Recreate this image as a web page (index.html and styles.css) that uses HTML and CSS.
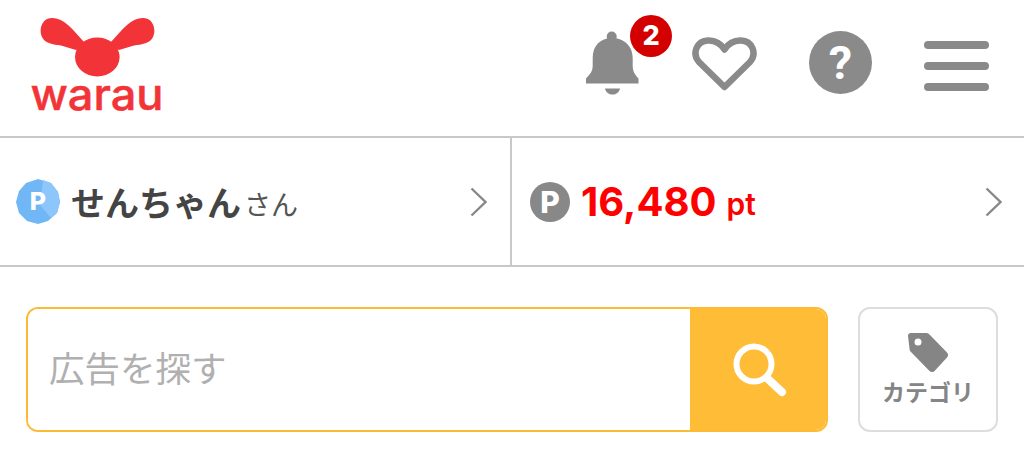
FILE: index.html
```html
<!DOCTYPE html>
<html lang="ja">
<head>
<meta charset="utf-8">
<title>warau</title>
<link rel="stylesheet" href="styles.css">
</head>
<body>
<header class="header">
  <a class="logo">
    <svg class="logo-svg" viewBox="30 17 135 108" width="135" height="108">
      <g fill="#f23438">
        <path d="M86 44 C80 38 74 30 68 25 C61 18.500 53 16.500 47 19 C41 22 39 31 42 37 C45 43.500 53 44.500 61 45.500 L76 50 Z"/>
        <path d="M109 44 C115 38 121 30 127 25 C134 18.500 142 16.500 148 19 C154 22 156 31 153 37 C150 43.500 142 44.500 134 45.500 L119 50 Z"/>
        <ellipse cx="97.300" cy="57" rx="22.300" ry="19.400"/>
      </g>
      <text class="logo-text" x="30.500" y="110" textLength="133" lengthAdjust="spacingAndGlyphs">warau</text>
    </svg>
  </a>
  <nav class="icons">
    <div class="bell">
      <svg viewBox="586 30 54 66" width="54" height="66">
        <g fill="#8a8a8a">
          <circle cx="611.700" cy="36.500" r="5"/>
          <path d="M612 38 C600 38 592.700 46 592.700 58 L592.700 66 C592.700 72 589 75 586 78.500 L586 83.500 L638.500 83.500 L638.500 78.500 C635.500 75 632.700 72 632.700 66 L632.700 58 C632.700 46 624 38 612 38 Z"/>
          <path d="M605 88.500 L620 88.500 C619 92.500 616 94.500 612.500 94.500 C609 94.500 606 92.500 605 88.500 Z"/>
        </g>
      </svg>
      <span class="badge">2</span>
    </div>
    <svg class="heart" viewBox="692 37 65 54" width="65" height="54">
      <path d="M724.500 87 L699 62 C691.500 53 697 41 708 40.500 C715 40.200 721 44 724.500 49.500 C728 44 734 40.200 741 40.500 C752 41 757.500 53 750 62 Z" fill="none" stroke="#8a8a8a" stroke-width="6.500" stroke-linejoin="round"/>
    </svg>
    <div class="help">?</div>
    <div class="menu"><span class="bar"></span><span class="bar"></span><span class="bar"></span></div>
  </nav>
</header>

<section class="account">
  <a class="cell cell-user">
    <svg class="rank" viewBox="0 0 44 45" width="44" height="45">
      <path d="M22 0 L35 4 L42 13 L44 23 L41 34 L32 42 L22 45 L11 42 L3 34 L0 23 L3 12 L10 4 Z" fill="#72b7f5"/>
      <path d="M27 1 L35 4 L42 13 L44 23 L41 34 L35 39 L24 26 Z" fill="#8cc6fb"/>
    </svg>
    <span class="rank-letter">P</span>
    <span class="name">せんちゃん</span><span class="san">さん</span>
    <svg class="chev" viewBox="0 0 17 30" width="17" height="30"><path d="M1.500 1.500 L15.500 15 L1.500 28.500" fill="none" stroke="#888" stroke-width="2.400"/></svg>
  </a>
  <a class="cell cell-points">
    <span class="p-mark">P</span>
    <span class="points">16,480</span><span class="pt">pt</span>
    <svg class="chev" viewBox="0 0 17 30" width="17" height="30"><path d="M1.500 1.500 L15.500 15 L1.500 28.500" fill="none" stroke="#888" stroke-width="2.400"/></svg>
  </a>
</section>

<section class="search-row">
  <form class="search">
    <input class="search-input" type="text" placeholder="広告を探す">
    <button class="search-btn" type="button">
      <svg viewBox="732 342 56 54" width="56" height="54">
        <circle cx="753" cy="363" r="17.500" fill="none" stroke="#fff" stroke-width="6"/>
        <path d="M767 378 L781 391" stroke="#fff" stroke-width="8" stroke-linecap="round"/>
      </svg>
    </button>
  </form>
  <a class="category">
    <svg class="tag" viewBox="908 332 41 41" width="41" height="41">
      <path fill-rule="evenodd" fill="#858585" d="M911 333 L926 333 C927.500 333 928.500 333.500 929.500 334.500 L947 352.500 C948.500 354 948.500 356 947 357.500 L935 370.500 C933.500 372.500 931 372.500 929.500 371 L911 352 C910 351 909.500 350 909.500 348.500 L908 336 C908 334 909 333 911 333 Z M918 338.500 A3.500 3.500 0 1 0 918 345.500 A3.500 3.500 0 1 0 918 338.500 Z"/>
    </svg>
    <span class="category-label">カテゴリ</span>
  </a>
</section>
</body>
</html>
```

FILE: styles.css
```css
* { box-sizing: border-box; }
html, body { margin: 0; padding: 0; }
body {
  width: 1024px;
  height: 457px;
  overflow: hidden;
  background: #fff;
  font-family: "Noto Sans CJK JP", "Noto Sans", sans-serif;
  color: #444;
}
.header {
  height: 138px;
  border-bottom: 2px solid #c8c8c8;
  display: flex;
  align-items: flex-start;
  justify-content: space-between;
  padding: 17px 35px 0 30px;
}
.logo { display: block; line-height: 0; }
.logo-text {
  font-family: "Inter", sans-serif;
  font-weight: 500;
  font-size: 44px;
  fill: #f23438;
  stroke: #f23438;
  stroke-width: 0.500;
  stroke-linejoin: round;
}
.icons {
  display: flex;
  align-items: flex-start;
}
.bell {
  position: relative;
  width: 54px;
  height: 66px;
  margin-top: 13px;
  line-height: 0;
}
.badge {
  position: absolute;
  left: 44px;
  top: -15px;
  width: 42px;
  height: 42px;
  border-radius: 50%;
  background: #d40000;
  color: #fff;
  font-family: "Inter", sans-serif;
  font-weight: 800;
  font-size: 27px;
  line-height: 42px;
  text-align: center;
}
.heart { margin: 20px 0 0 52px; display: block; }
.help {
  width: 63px;
  height: 63px;
  margin: 14px 0 0 52px;
  border-radius: 50%;
  background: #8a8a8a;
  color: #fff;
  font-family: "Roboto", sans-serif;
  font-weight: 700;
  font-size: 47px;
  line-height: 63px;
  text-align: center;
}
.menu {
  width: 65px;
  height: 50px;
  margin: 24px 0 0 52px;
  display: flex;
  flex-direction: column;
  justify-content: space-between;
}
.bar {
  display: block;
  height: 8px;
  border-radius: 4px;
  background: #8a8a8a;
}

.account {
  display: grid;
  grid-template-columns: 512px 512px;
  height: 129px;
  border-bottom: 2px solid #c8c8c8;
}
.cell {
  display: flex;
  align-items: center;
  position: relative;
}
.cell-user {
  border-right: 2px solid #c8c8c8;
  padding: 0 23px 0 16px;
}
.cell-points {
  padding: 0 22px 0 18px;
}
.rank { display: block; flex: none; }
.rank-letter {
  position: absolute;
  left: 16px;
  width: 44px;
  text-align: center;
  color: #fff;
  font-family: "Inter", sans-serif;
  font-weight: 800;
  font-size: 25px;
  line-height: 45px;
}
.name {
  margin-left: 11px;
  font-weight: 700;
  font-size: 34px;
  color: #444;
  line-height: 1;
}
.san {
  margin: 4px 0 0 3px;
  font-size: 27px;
  color: #555;
  line-height: 1;
}
.chev { margin-left: auto; display: block; flex: none; }
.p-mark {
  flex: none;
  width: 40px;
  height: 40px;
  border-radius: 50%;
  background: #888;
  color: #fff;
  font-family: "Inter", sans-serif;
  font-weight: 800;
  font-size: 30px;
  line-height: 40px;
  text-align: center;
}
.points {
  margin-left: 11px;
  font-family: "Inter", sans-serif;
  font-weight: 700;
  font-size: 40px;
  line-height: 1;
  color: #f00;
}
.pt {
  margin: 4px 0 0 10px;
  font-family: "Inter", sans-serif;
  font-weight: 600;
  font-size: 30px;
  line-height: 1;
  color: #f00;
}

.search-row {
  display: flex;
  gap: 30px;
  padding: 40px 26px 0;
}
.search {
  flex: 1;
  height: 125px;
  display: flex;
  border: 2px solid #fdbb35;
  border-radius: 12px;
  overflow: hidden;
}
.search-input {
  flex: 1;
  min-width: 0;
  border: 0;
  outline: 0;
  padding: 0 0 6px 21px;
  background: #fff;
  font-family: "Noto Sans CJK JP", sans-serif;
  font-size: 35.500px;
  color: #444;
}
.search-input::placeholder { color: #b0b0b0; opacity: 1; }
.search-btn {
  flex: none;
  width: 136px;
  border: 0;
  padding: 0 0 0 5px;
  background: #ffbc37;
  display: flex;
  align-items: center;
  justify-content: center;
}
.search-btn svg { display: block; }
.category {
  flex: none;
  width: 140px;
  height: 125px;
  border: 2px solid #ddd;
  border-radius: 12px;
  display: flex;
  flex-direction: column;
  align-items: center;
  padding-top: 23px;
}
.tag { display: block; }
.category-label {
  margin-top: 1px;
  font-weight: 700;
  font-size: 23px;
  line-height: 34px;
  color: #858585;
}
```
